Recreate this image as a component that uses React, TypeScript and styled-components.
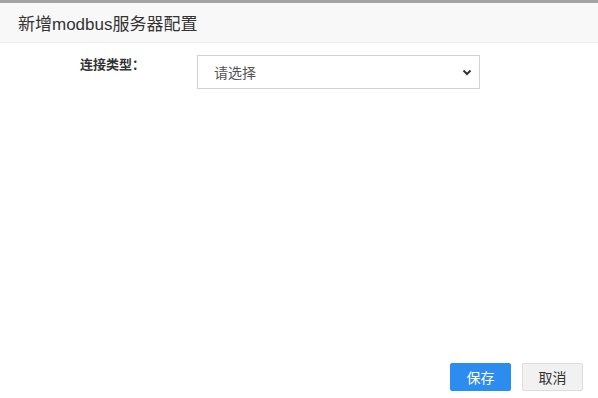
import React from 'react';
import styled, { createGlobalStyle } from 'styled-components';

const GlobalStyle = createGlobalStyle`
  html, body {
    margin: 0;
    padding: 0;
    background: #fff;
  }
  body {
    font-family: "Liberation Sans", "Noto Sans CJK SC", sans-serif;
  }
`;

const Dialog = styled.div`
  width: 598px;
  height: 398px;
  box-sizing: border-box;
  border-top: 3px solid #a3a3a3;
  background: #fff;
  display: flex;
  flex-direction: column;
`;

const Header = styled.div`
  height: 40px;
  box-sizing: border-box;
  padding: 0 18px;
  display: flex;
  align-items: center;
  background: #f8f8f8;
  border-bottom: 1px solid #eee;
  font-size: 17px;
  color: #333;
`;

const Body = styled.div`
  flex: 1;
  padding: 12px 0 0;
`;

const FormRow = styled.div`
  display: flex;
  align-items: flex-start;
`;

const Label = styled.label`
  width: 145px;
  text-align: right;
  line-height: 20px;
  font-size: 13px;
  font-weight: bold;
  color: #333;
  box-sizing: border-box;
`;

const SelectBox = styled.div`
  margin-left: 52px;
  width: 283px;
  height: 34px;
  box-sizing: border-box;
  border: 1px solid #d2d2dc;
  display: flex;
  align-items: center;
  justify-content: space-between;
  padding: 0 6px 0 16px;
  font-size: 14px;
  color: #555;
`;

const Footer = styled.div`
  display: flex;
  justify-content: flex-end;
  gap: 11px;
  padding: 0 15px 7px 0;
`;

const Button = styled.button<{ $primary?: boolean }>`
  width: 61px;
  height: 28px;
  box-sizing: border-box;
  border-radius: 2px;
  font-family: inherit;
  font-size: 14px;
  cursor: pointer;
  border: 1px solid ${(p) => (p.$primary ? '#2d8cf0' : '#dedede')};
  background: ${(p) => (p.$primary ? '#2d8cf0' : '#f1f1f1')};
  color: ${(p) => (p.$primary ? '#fff' : '#333')};
`;

const App: React.FC = () => (
  <>
    <GlobalStyle />
    <Dialog>
      <Header>新增modbus服务器配置</Header>
      <Body>
        <FormRow>
          <Label>连接类型：</Label>
          <SelectBox>
            <span>请选择</span>
            <svg width="12" height="12" viewBox="0 0 12 12">
              <path d="M2.5 4.5 L6 8 L9.5 4.5" fill="none" stroke="#333" strokeWidth="2" />
            </svg>
          </SelectBox>
        </FormRow>
      </Body>
      <Footer>
        <Button $primary>保存</Button>
        <Button>取消</Button>
      </Footer>
    </Dialog>
  </>
);

export default App;
